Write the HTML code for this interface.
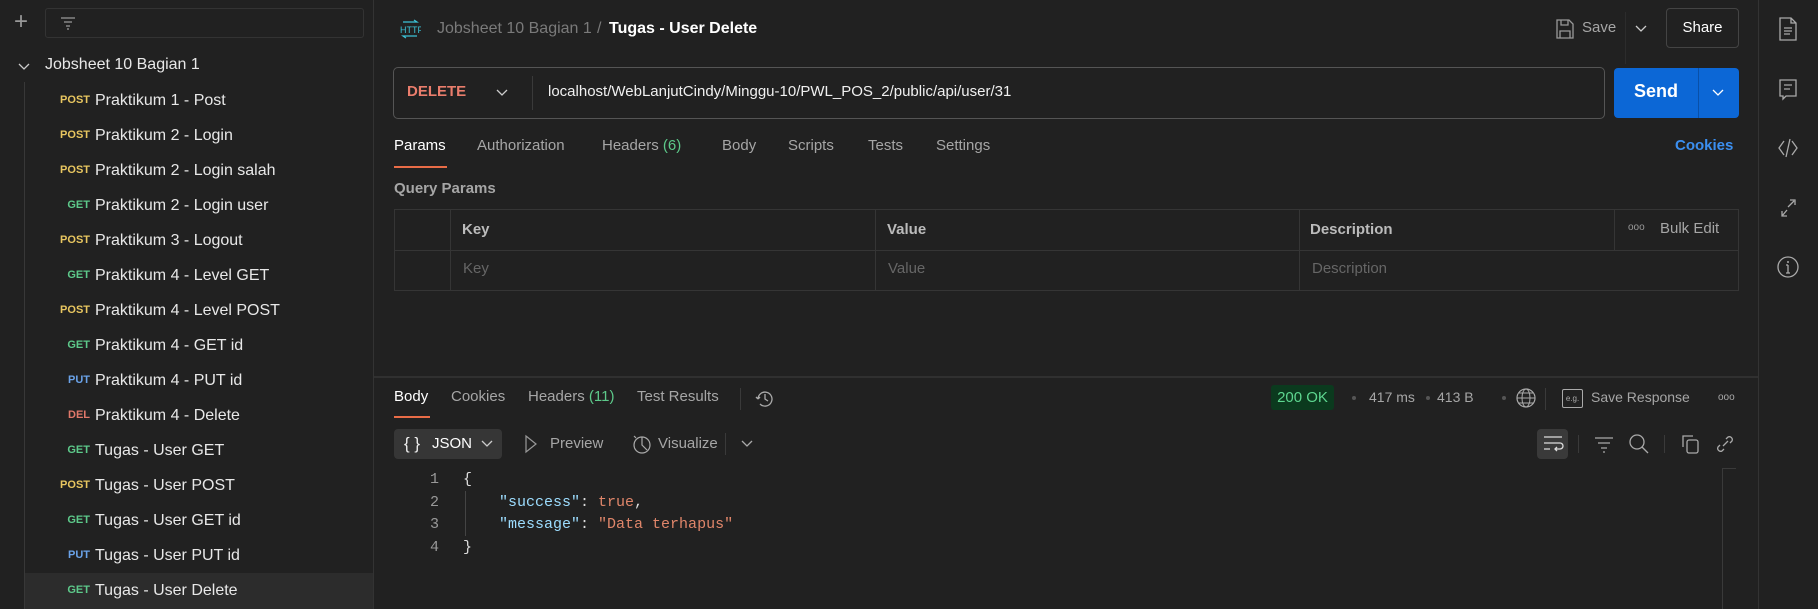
<!DOCTYPE html>
<html><head><meta charset="utf-8"><style>
*{box-sizing:border-box;margin:0;padding:0}
body{width:1818px;height:609px;background:#212121;font-family:"Liberation Sans",sans-serif;color:#e8e8e8;position:relative;overflow:hidden;font-size:15px}
.a{position:absolute;white-space:nowrap}
.m{font-size:11px;font-weight:bold;text-align:right;width:60px}
.post{color:#e8c660}.get{color:#5dc98a}.put{color:#6aa2e8}.del{color:#e0786a}
.it{position:absolute;left:30px;width:343px;height:35px;line-height:35px}
.it .m{position:absolute;left:0;top:0;line-height:35px}
.it .n{position:absolute;left:65px;font-size:16px;color:#e8e8e8}
.tab{position:absolute;top:137px;font-size:15px;color:#a6a6a6}
.mono{font-family:"Liberation Mono",monospace;font-size:15px}
</style></head><body>
<!-- sidebar -->
<div class="a" style="left:373px;top:0;width:1px;height:609px;background:#333"></div>
<div class="a" style="left:14px;top:10px;font-size:24px;color:#999;font-weight:300;line-height:24px">+</div>
<div class="a" style="left:45px;top:8px;width:319px;height:30px;border:1px solid #333;border-radius:3px"></div>
<svg class="a" style="left:60px;top:15px" width="16" height="16"><path d="M1 3h14M4 7h8M6 11h4M7 14h2" stroke="#999" stroke-width="1.3"/></svg>
<svg class="a" style="left:18px;top:62px" width="12" height="10"><path d="M1 2l5 5 5-5" stroke="#ccc" fill="none" stroke-width="1.3"/></svg>
<div class="a" style="left:45px;top:56px;font-size:16px;color:#e8e8e8">Jobsheet 10 Bagian 1</div>
<div class="a" style="left:24px;top:82px;width:1px;height:527px;background:#383838"></div>
<div class="a" style="left:25px;top:573px;width:348px;height:36px;background:#2c2c2c"></div>
<div class="it" style="top:83px"><span class="m post">POST</span><span class="n">Praktikum 1 - Post</span></div>
<div class="it" style="top:118px"><span class="m post">POST</span><span class="n">Praktikum 2 - Login</span></div>
<div class="it" style="top:153px"><span class="m post">POST</span><span class="n">Praktikum 2 - Login salah</span></div>
<div class="it" style="top:188px"><span class="m get">GET</span><span class="n">Praktikum 2 - Login user</span></div>
<div class="it" style="top:223px"><span class="m post">POST</span><span class="n">Praktikum 3 - Logout</span></div>
<div class="it" style="top:258px"><span class="m get">GET</span><span class="n">Praktikum 4 - Level GET</span></div>
<div class="it" style="top:293px"><span class="m post">POST</span><span class="n">Praktikum 4 - Level POST</span></div>
<div class="it" style="top:328px"><span class="m get">GET</span><span class="n">Praktikum 4 - GET id</span></div>
<div class="it" style="top:363px"><span class="m put">PUT</span><span class="n">Praktikum 4 - PUT id</span></div>
<div class="it" style="top:398px"><span class="m del">DEL</span><span class="n">Praktikum 4 - Delete</span></div>
<div class="it" style="top:433px"><span class="m get">GET</span><span class="n">Tugas - User GET</span></div>
<div class="it" style="top:468px"><span class="m post">POST</span><span class="n">Tugas - User POST</span></div>
<div class="it" style="top:503px"><span class="m get">GET</span><span class="n">Tugas - User GET id</span></div>
<div class="it" style="top:538px"><span class="m put">PUT</span><span class="n">Tugas - User PUT id</span></div>
<div class="it" style="top:573px"><span class="m get">GET</span><span class="n">Tugas - User Delete</span></div>

<!-- header -->
<div class="a" style="left:399px;top:19px;width:22px;height:20px">
<svg width="22" height="20"><path d="M4 3h14l-3-2M18 17H4l3 2" stroke="#3cc4d8" fill="none" stroke-width="1.2"/><text x="1" y="14" font-size="9" fill="#3cc4d8" font-family="Liberation Sans">HTTP</text></svg></div>
<div class="a" style="left:437px;top:20px;font-size:16px;color:#7a7a7a">Jobsheet 10 Bagian 1</div>
<div class="a" style="left:597px;top:20px;font-size:16px;color:#7a7a7a">/</div>
<div class="a" style="left:609px;top:20px;font-size:16px;color:#fff;font-weight:bold">Tugas - User Delete</div>
<svg class="a" style="left:1555px;top:18px" width="20" height="22"><path d="M2 2h12l4 4v14H2z M6 2v5h7V2 M5 20v-7h10v7" stroke="#999" fill="none" stroke-width="1.3"/></svg>
<div class="a" style="left:1582px;top:19px;font-size:15px;color:#a6a6a6">Save</div>
<div class="a" style="left:1625px;top:12px;width:1px;height:52px;background:#2c2c2c"></div>
<svg class="a" style="left:1635px;top:24px" width="12" height="10"><path d="M1 2l5 5 5-5" stroke="#ccc" fill="none" stroke-width="1.3"/></svg>
<div class="a" style="left:1666px;top:8px;width:73px;height:40px;border:1px solid #444;border-radius:4px;text-align:center;line-height:38px;font-size:15px;color:#fff">Share</div>

<!-- url bar -->
<div class="a" style="left:393px;top:67px;width:1212px;height:52px;border:1px solid #555;border-radius:5px"></div>
<div class="a" style="left:407px;top:83px;font-size:15px;color:#ea7d6c;font-weight:bold">DELETE</div>
<svg class="a" style="left:496px;top:88px" width="12" height="10"><path d="M1 2l5 5 5-5" stroke="#ccc" fill="none" stroke-width="1.3"/></svg>
<div class="a" style="left:532px;top:76px;width:1px;height:34px;background:#3a3a3a"></div>
<div class="a" style="left:548px;top:83px;font-size:15px;color:#f0f0f0">localhost/WebLanjutCindy/Minggu-10/PWL_POS_2/public/api/user/31</div>
<div class="a" style="left:1614px;top:68px;width:125px;height:50px;background:#0c67d6;border-radius:4px"></div>
<div class="a" style="left:1698px;top:68px;width:1px;height:50px;background:#0950a8"></div>
<div class="a" style="left:1634px;top:81px;font-size:18px;color:#fff;font-weight:bold">Send</div>
<svg class="a" style="left:1712px;top:88px" width="12" height="10"><path d="M1 2l5 5 5-5" stroke="#fff" fill="none" stroke-width="1.3"/></svg>

<!-- request tabs -->
<div class="tab" style="left:394px;color:#fff">Params</div>
<div class="a" style="left:394px;top:166px;width:53px;height:2px;background:#e96c47"></div>
<div class="tab" style="left:477px">Authorization</div>
<div class="tab" style="left:602px">Headers <span style="color:#5dc98a">(6)</span></div>
<div class="tab" style="left:722px">Body</div>
<div class="tab" style="left:788px">Scripts</div>
<div class="tab" style="left:868px">Tests</div>
<div class="tab" style="left:936px">Settings</div>
<div class="tab" style="left:1675px;color:#3b8ff0;font-weight:bold">Cookies</div>
<div class="a" style="left:394px;top:180px;font-size:15px;color:#a6a6a6;font-weight:bold">Query Params</div>

<!-- table -->
<div class="a" style="left:394px;top:209px;width:1345px;height:82px;border:1px solid #353535"></div>
<div class="a" style="left:394px;top:250px;width:1345px;height:1px;background:#353535"></div>
<div class="a" style="left:450px;top:209px;width:1px;height:82px;background:#353535"></div>
<div class="a" style="left:875px;top:209px;width:1px;height:82px;background:#353535"></div>
<div class="a" style="left:1299px;top:209px;width:1px;height:82px;background:#353535"></div>
<div class="a" style="left:1614px;top:209px;width:1px;height:41px;background:#353535"></div>
<div class="a" style="left:462px;top:221px;color:#bbb;font-weight:bold">Key</div>
<div class="a" style="left:887px;top:221px;color:#bbb;font-weight:bold">Value</div>
<div class="a" style="left:1310px;top:221px;color:#bbb;font-weight:bold">Description</div>
<div class="a" style="left:1628px;top:222px;color:#999;font-size:10px">ooo</div>
<div class="a" style="left:1660px;top:220px;color:#a6a6a6">Bulk Edit</div>
<div class="a" style="left:463px;top:260px;color:#666">Key</div>
<div class="a" style="left:888px;top:260px;color:#666">Value</div>
<div class="a" style="left:1312px;top:260px;color:#666">Description</div>

<!-- response -->
<div class="a" style="left:374px;top:376px;width:1384px;height:2px;background:#303030"></div>
<div class="tab" style="top:388px;left:394px;color:#fff">Body</div>
<div class="a" style="left:394px;top:416px;width:36px;height:2px;background:#e96c47"></div>
<div class="tab" style="top:388px;left:451px">Cookies</div>
<div class="tab" style="top:388px;left:528px">Headers <span style="color:#5dc98a">(11)</span></div>
<div class="tab" style="top:388px;left:637px">Test Results</div>
<div class="a" style="left:740px;top:388px;width:1px;height:22px;background:#3a3a3a"></div>
<svg class="a" style="left:754px;top:388px" width="22" height="22"><path d="M4 11a7 7 0 1 1 2 5M4 11l-2-2M4 11l2-2M11 6v5l3 2" stroke="#aaa" fill="none" stroke-width="1.3"/></svg>
<div class="a" style="left:1271px;top:385px;width:63px;height:25px;background:#0b3a1e;border-radius:3px;color:#5dd68f;text-align:center;line-height:25px;font-size:15px">200 OK</div>
<div class="a" style="left:1352px;top:396px;width:4px;height:4px;border-radius:2px;background:#555"></div>
<div class="a" style="left:1369px;top:389px;color:#a6a6a6;font-size:14px">417 ms</div>
<div class="a" style="left:1426px;top:396px;width:4px;height:4px;border-radius:2px;background:#555"></div>
<div class="a" style="left:1437px;top:389px;color:#a6a6a6;font-size:14px">413 B</div>
<div class="a" style="left:1502px;top:396px;width:4px;height:4px;border-radius:2px;background:#555"></div>
<svg class="a" style="left:1515px;top:387px" width="22" height="22"><circle cx="11" cy="11" r="9" stroke="#aaa" fill="none" stroke-width="1.2"/><path d="M2 11h18M4 6h14M4 16h14" stroke="#aaa" fill="none" stroke-width="1"/><ellipse cx="11" cy="11" rx="4" ry="9" stroke="#aaa" fill="none"/></svg>
<div class="a" style="left:1545px;top:388px;width:1px;height:22px;background:#3a3a3a"></div>
<div class="a" style="left:1562px;top:389px;width:21px;height:19px;border:1px solid #aaa;border-radius:2px;font-size:8px;color:#aaa;text-align:center;line-height:17px">e.g.</div>
<div class="a" style="left:1591px;top:389px;color:#a6a6a6;font-size:14px">Save Response</div>
<div class="a" style="left:1718px;top:392px;color:#aaa;font-size:10px">ooo</div>

<div class="a" style="left:394px;top:429px;width:108px;height:30px;background:#363636;border-radius:4px"></div>
<div class="a" style="left:404px;top:434px;color:#eee;font-size:17px">{ }</div>
<div class="a" style="left:432px;top:435px;color:#fff;font-size:15px">JSON</div>
<svg class="a" style="left:481px;top:439px" width="12" height="10"><path d="M1 2l5 5 5-5" stroke="#ccc" fill="none" stroke-width="1.3"/></svg>
<svg class="a" style="left:524px;top:434px" width="14" height="20"><path d="M2 2l10 8-10 8z" stroke="#999" fill="none" stroke-width="1.2"/></svg>
<div class="a" style="left:550px;top:435px;color:#a6a6a6">Preview</div>
<svg class="a" style="left:631px;top:433px" width="22" height="22"><circle cx="11" cy="12" r="8" stroke="#aaa" fill="none" stroke-width="1.2"/><path d="M11 4v8l5 5M3 3l2 2" stroke="#aaa" fill="none" stroke-width="1.2"/></svg>
<div class="a" style="left:658px;top:435px;color:#a6a6a6">Visualize</div>
<div class="a" style="left:725px;top:433px;width:1px;height:22px;background:#3a3a3a"></div>
<svg class="a" style="left:741px;top:439px" width="12" height="10"><path d="M1 2l5 5 5-5" stroke="#aaa" fill="none" stroke-width="1.3"/></svg>

<div class="a" style="left:1537px;top:429px;width:31px;height:30px;background:#3a3a3a;border-radius:4px"></div>
<svg class="a" style="left:1542px;top:434px" width="22" height="20"><path d="M2 3h18M2 9h16a3 3 0 0 1 0 6h-5M15 13l-2 2 2 2M2 15h6" stroke="#ddd" fill="none" stroke-width="1.3"/></svg>
<div class="a" style="left:1578px;top:435px;width:1px;height:18px;background:#3a3a3a"></div>
<svg class="a" style="left:1594px;top:434px" width="20" height="20"><path d="M1 4h18M4 9h12M7 14h6M9 18h2" stroke="#aaa" fill="none" stroke-width="1.3"/></svg>
<svg class="a" style="left:1628px;top:433px" width="22" height="22"><circle cx="9" cy="9" r="7" stroke="#aaa" fill="none" stroke-width="1.3"/><path d="M14 14l6 6" stroke="#aaa" stroke-width="1.3"/></svg>
<div class="a" style="left:1664px;top:435px;width:1px;height:18px;background:#3a3a3a"></div>
<svg class="a" style="left:1679px;top:433px" width="22" height="22"><path d="M4 14V3h10" stroke="#aaa" fill="none" stroke-width="1.3"/><rect x="8" y="7" width="11" height="13" rx="2" stroke="#aaa" fill="none" stroke-width="1.3"/></svg>
<svg class="a" style="left:1714px;top:433px" width="22" height="22"><path d="M9 13l5-5M6 12l-2 2a3 3 0 0 0 4 4l2-2M16 10l2-2a3 3 0 0 0-4-4l-2 2" stroke="#aaa" fill="none" stroke-width="1.3"/></svg>

<div class="a" style="left:1722px;top:468px;width:1px;height:141px;background:#3a3a3a"></div>
<div class="a" style="left:1722px;top:468px;width:14px;height:1px;background:#3a3a3a"></div>

<div class="a mono" style="left:429px;top:469px;color:#999;line-height:22.5px;text-align:right;width:10px">1<br>2<br>3<br>4</div>
<div class="a" style="left:465px;top:491px;width:1px;height:45px;background:#444"></div>
<div class="a mono" style="left:463px;top:469px;color:#ddd;line-height:22.5px">{<br>&nbsp;&nbsp;&nbsp;&nbsp;<span style="color:#9cdcfe">"success"</span>: <span style="color:#e0866a">true</span>,<br>&nbsp;&nbsp;&nbsp;&nbsp;<span style="color:#9cdcfe">"message"</span>: <span style="color:#e0866a">"Data terhapus"</span><br>}</div>

<!-- right bar -->
<div class="a" style="left:1758px;top:0;width:1px;height:609px;background:#333"></div>
<svg class="a" style="left:1777px;top:16px" width="22" height="26"><path d="M3 2h11l5 5v17H3z M14 2v5h5 M7 12h8M7 15h8M7 18h6" stroke="#aaa" fill="none" stroke-width="1.3"/></svg>
<svg class="a" style="left:1778px;top:78px" width="20" height="24"><path d="M2 2h16v16H8l-3 3v-3H2z M6 7h8M6 11h6" stroke="#aaa" fill="none" stroke-width="1.3"/></svg>
<svg class="a" style="left:1777px;top:137px" width="22" height="22"><path d="M7 4L2 11l5 7M15 4l5 7-5 7M13 2l-4 18" stroke="#aaa" fill="none" stroke-width="1.3"/></svg>
<svg class="a" style="left:1778px;top:197px" width="20" height="24"><path d="M10 10l6-6M12 3h5v5M9 13l-5 6M4 14v5h5" stroke="#aaa" fill="none" stroke-width="1.3"/></svg>
<svg class="a" style="left:1776px;top:255px" width="24" height="24"><circle cx="12" cy="12" r="10" stroke="#aaa" fill="none" stroke-width="1.3"/><path d="M12 10v8M10 10h2M10 18h4" stroke="#aaa" stroke-width="1.3"/><circle cx="12" cy="7" r="1" fill="#aaa"/></svg>
</body></html>
